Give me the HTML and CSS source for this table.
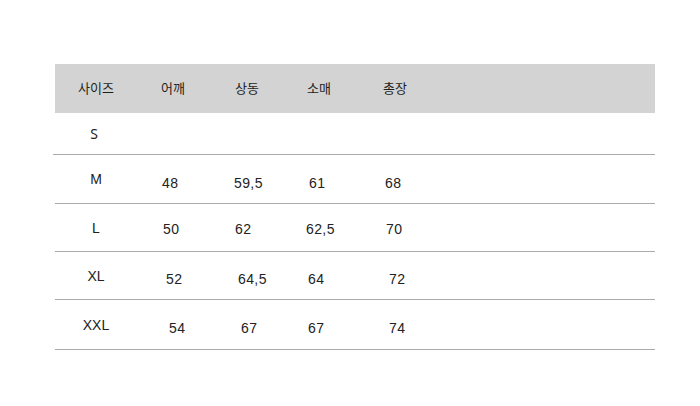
FILE: index.html
```html
<!DOCTYPE html>
<html lang="ko">
<head>
<meta charset="utf-8">
<link rel="stylesheet" href="styles.css">
</head>
<body>
<div class="size-table">
  <div class="row head">
    <div class="cell label">사이즈</div>
    <div class="cell">어깨</div>
    <div class="cell">상동</div>
    <div class="cell">소매</div>
    <div class="cell">총장</div>
  </div>
  <div class="row row-s">
    <div class="cell label s">S</div>
    <div class="cell"></div>
    <div class="cell"></div>
    <div class="cell"></div>
    <div class="cell"></div>
  </div>
  <div class="row row-m">
    <div class="cell label">M</div>
    <div class="cell">48</div>
    <div class="cell">59,5</div>
    <div class="cell">61</div>
    <div class="cell">68</div>
  </div>
  <div class="row row-l">
    <div class="cell label">L</div>
    <div class="cell">50</div>
    <div class="cell">62</div>
    <div class="cell">62,5</div>
    <div class="cell">70</div>
  </div>
  <div class="row row-xl">
    <div class="cell label">XL</div>
    <div class="cell">52</div>
    <div class="cell">64,5</div>
    <div class="cell">64</div>
    <div class="cell">72</div>
  </div>
  <div class="row row-xxl">
    <div class="cell label">XXL</div>
    <div class="cell">54</div>
    <div class="cell">67</div>
    <div class="cell">67</div>
    <div class="cell">74</div>
  </div>
</div>
</body>
</html>
```

FILE: styles.css
```css
html, body {
  margin: 0;
  padding: 0;
  background: #ffffff;
}

body {
  font-family: "Liberation Sans", Arial, "Noto Sans CJK KR", sans-serif;
  font-size: 14px;
  color: #222222;
}

.size-table {
  margin: 64px 0 0 55px;
  width: 600px;
}

.row {
  display: grid;
  grid-template-columns: 82px 74px 72px 76px 1fr;
  align-items: center;
  border-bottom: 1px solid #ababab;
  --o2: 24px;
  --o3: 24px;
  --o4: 24px;
  --o5: 24px;
  --dy: 0px;
}

.cell {
  white-space: nowrap;
  line-height: 16px;
}

.cell:nth-child(2) { padding-left: var(--o2); padding-top: var(--dy); }
.cell:nth-child(3) { padding-left: var(--o3); padding-top: var(--dy); }
.cell:nth-child(4) { padding-left: var(--o4); padding-top: var(--dy); }
.cell:nth-child(5) { padding-left: var(--o5); padding-top: var(--dy); }

.row:not(.head) .cell:not(.label) {
  letter-spacing: 0.4px;
}

.label {
  text-align: center;
}

.head {
  height: 49px;
  background: #d3d3d3;
  border-bottom: none;
  font-family: "Noto Sans CJK KR", sans-serif;
  font-size: 13px;
  color: #1e1e1e;
}

.head .cell {
  padding-bottom: 2px;
}

.s {
  font-family: "Noto Sans", "Noto Sans CJK KR", sans-serif;
  font-size: 14px;
}

.row-s {
  height: 41px;
  margin-left: -2px;
}

.row-m {
  height: 48px;
  --o2: 25px;
  --o3: 23px;
  --o4: 26px;
  --o5: 26px;
  --dy: 8px;
}

.row-l {
  height: 47px;
  --o2: 26px;
  --o3: 24px;
  --o4: 23px;
  --o5: 27px;
  --dy: 3px;
}

.row-xl {
  height: 47px;
  --o2: 29px;
  --o3: 27px;
  --o4: 25px;
  --o5: 30px;
  --dy: 7px;
}

.row-xxl {
  height: 49px;
  --o2: 32px;
  --o3: 30px;
  --o4: 25px;
  --o5: 30px;
  --dy: 7px;
}
```
